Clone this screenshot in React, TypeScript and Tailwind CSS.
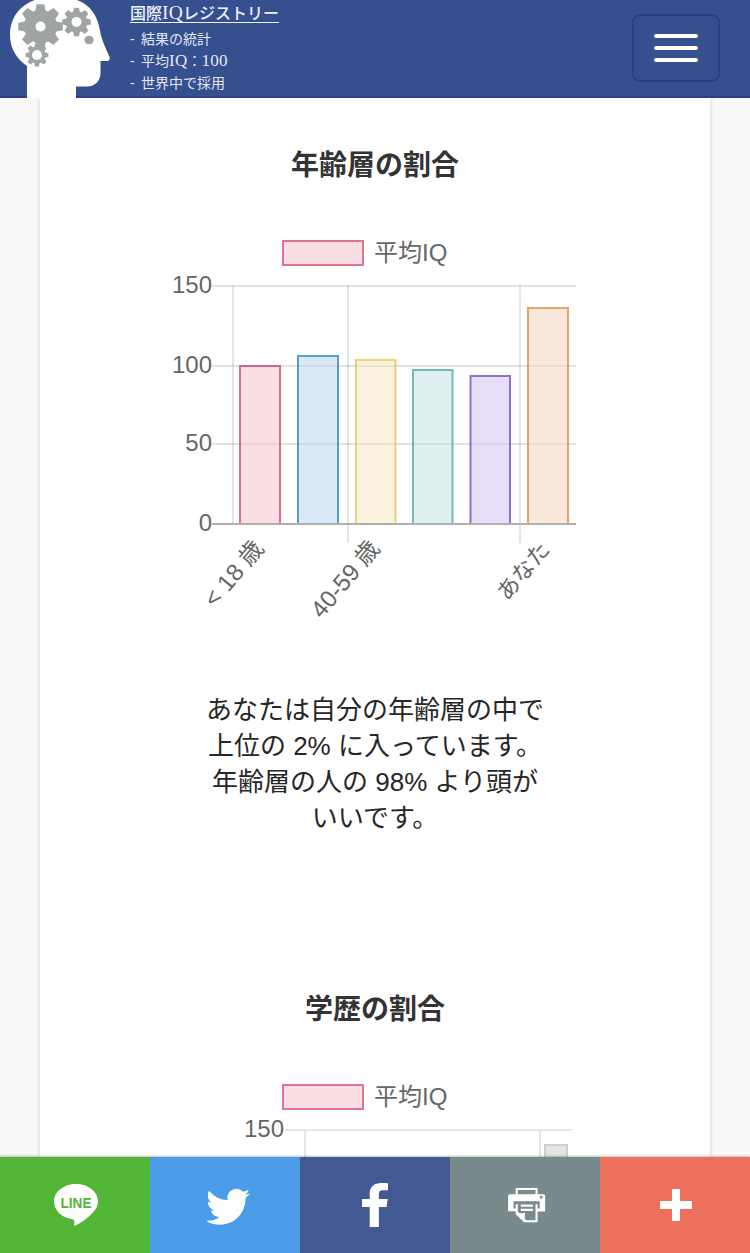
import type { ReactNode } from 'react'

const FONT = "font-['Liberation_Sans','Noto_Sans_CJK_JP',sans-serif]"

type Bar = { x: number; top: number; width: number; stroke: string; fill: string }

const AGE_BARS: Bar[] = [
  { x: 80, top: 136, width: 40, stroke: '#d9718e', fill: '#f9dfe4' },
  { x: 138, top: 126, width: 40, stroke: '#5a9fc9', fill: '#d9e9f8' },
  { x: 196, top: 130, width: 39.5, stroke: '#f0d078', fill: '#fcf3de' },
  { x: 253, top: 140, width: 39.5, stroke: '#72bcb8', fill: '#def0f0' },
  { x: 310.5, top: 146, width: 39.5, stroke: '#9270c8', fill: '#e7def9' },
  { x: 368, top: 78, width: 40, stroke: '#dfa767', fill: '#fae9da' },
]

const AGE_LABELS = [
  { text: '< 18 歳', x: 105, y: 319, size: 24 },
  { text: '40-59 歳', x: 221, y: 319, size: 24 },
  { text: 'あなた', x: 391, y: 320, size: 22.5 },
]

function Legend() {
  return (
    <g>
      <rect x="123" y="11" width="80" height="24" fill="#f9dfe4" stroke="#e07392" strokeWidth="2" />
      <text x="214" y="31" fontSize="24">平均IQ</text>
    </g>
  )
}

function BarShape({ bar, base }: { bar: Bar; base: number }) {
  const right = bar.x + bar.width
  return (
    <path
      d={`M${bar.x} ${base}V${bar.top}H${right}V${base}`}
      fill={bar.fill}
      stroke={bar.stroke}
      strokeWidth="2"
    />
  )
}

function AgeChart() {
  return (
    <svg width="430" height="400" viewBox="0 0 430 400" fill="#666" className="block">
      <Legend />
      <g stroke="#000" strokeOpacity="0.05" strokeWidth="2">
        <path d="M52 56H416M52 136H416M52 214H416" />
      </g>
      {AGE_BARS.map((bar) => (
        <BarShape key={bar.x} bar={bar} base={293} />
      ))}
      <g stroke="#000" strokeWidth="2">
        <path d="M52 56H416M52 136H416M52 214H416" strokeOpacity="0.06" />
        <path d="M73 55V293M188 55V313M360 55V313" strokeOpacity="0.1" />
      </g>
      <path d="M52 294H416" stroke="#b0b0b0" strokeWidth="2" />
      <g fontSize="24" textAnchor="end">
        <text x="52" y="63">150</text>
        <text x="52" y="143">100</text>
        <text x="52" y="221">50</text>
        <text x="52" y="301">0</text>
        {AGE_LABELS.map((label) => (
          <text
            key={label.text}
            fontSize={label.size}
            transform={`translate(${label.x} ${label.y}) rotate(-50)`}
          >
            {label.text}
          </text>
        ))}
      </g>
    </svg>
  )
}

function EducationChart() {
  return (
    <svg width="430" height="400" viewBox="0 0 430 400" fill="#666" className="block">
      <Legend />
      <BarShape bar={{ x: 385, top: 71, width: 22, stroke: '#cfcfcf', fill: '#e4e4e4' }} base={293} />
      <path d="M125 56H412M145 55V293M380 55V293" stroke="#000" strokeOpacity="0.1" strokeWidth="2" />
      <text x="124" y="63" fontSize="24" textAnchor="end">150</text>
    </svg>
  )
}

function Gear({ cx, cy, r, hole, teeth }: { cx: number; cy: number; r: number; hole: number; teeth: number }) {
  const angles = Array.from({ length: teeth }, (_, i) => (360 / teeth) * i)
  const half = r * 0.17
  return (
    <g transform={`translate(${cx} ${cy})`}>
      <circle r={r * 0.74} fill="#a0a5a3" />
      {angles.map((a) => (
        <path
          key={a}
          transform={`rotate(${a})`}
          fill="#a0a5a3"
          d={`M${-half * 1.4} ${-r * 0.65}L${-half} ${-r * 0.99}H${half}L${half * 1.4} ${-r * 0.65}Z`}
        />
      ))}
      <circle r={hole} fill="#fff" />
    </g>
  )
}

function HeadLogo() {
  return (
    <svg width="120" height="98" viewBox="0 0 120 98" className="block shrink-0">
      <path
        fill="#fff"
        d="M27 98V66C17 59 10 49 10 35C10 18 20 5 35 0C42-3 70-3 77 0C91 5 98 17 100 31C101 38 106 49 109.500 57C110.500 59.500 109 61 106 61H100.500V73C100.500 81 95 86.500 87 86.500H76V98Z"
      />
      <Gear cx={40.5} cy={26.5} r={22.5} hole={5} teeth={8} />
      <Gear cx={76.5} cy={22} r={14.5} hole={5} teeth={8} />
      <Gear cx={37} cy={55} r={11.5} hole={5} teeth={8} />
      <ellipse cx="89" cy="40" rx="4.700" ry="4.200" fill="#a0a5a3" />
    </svg>
  )
}

function Latin({ children }: { children: ReactNode }) {
  return (
    <span className="font-['Liberation_Serif',serif] text-[1.22em] leading-none tracking-[0.2px]">
      {children}
    </span>
  )
}

function Dash() {
  return <span className="inline-block w-[11px]">-</span>
}

function Header() {
  return (
    <header className="z-10 flex h-[98px] shrink-0 bg-[#364f8e] shadow-[inset_0_-2px_0_#303f7f]">
      <HeadLogo />
      <div className="flex-1 pl-2.5 text-[14px] leading-[22px] whitespace-nowrap text-[#e3e8f5]">
        <div className="mt-[3px] mb-[3px] h-[22px] text-[16px] font-medium text-[#eef2fb]">
          <span className="inline-block h-5 border-b border-[#eef2fb] leading-[22px]">
            国際<Latin>IQ</Latin>レジストリー
          </span>
        </div>
        <div className="h-[22px]"><Dash />結果の統計</div>
        <div className="h-[22px]"><Dash />平均<Latin>IQ</Latin>：<Latin>100</Latin></div>
        <div className="h-[22px]"><Dash />世界中で採用</div>
      </div>
      <button
        type="button"
        aria-label="メニュー"
        className="mt-3.5 mr-[30px] flex h-[68px] w-[88px] flex-col items-center justify-center gap-2 rounded-lg border-2 border-[#2c427d]"
      >
        <span className="h-1 w-11 rounded-[2px] bg-white" />
        <span className="h-1 w-11 rounded-[2px] bg-white" />
        <span className="h-1 w-11 rounded-[2px] bg-white" />
      </button>
    </header>
  )
}

function ShareIcon({ d }: { d: string }) {
  return (
    <svg width="64" height="64" viewBox="0 0 32 32" fill="#fff">
      <path d={d} />
    </svg>
  )
}

function LineIcon() {
  return (
    <svg width="64" height="64" viewBox="0 0 64 64">
      <path
        fill="#fff"
        d="M32 11C44 11 54 18.500 54 28.500C54 33 52 36.500 48.500 40C43.500 45.500 36 50.500 31.500 52.500C29.700 53.200 30 52 30.200 50.800C30.500 49 30.700 46.500 28 46C17.500 44.500 10 37.500 10 28.500C10 18.500 20 11 32 11Z"
      />
      <text
        x="32"
        y="34.500"
        textAnchor="middle"
        textLength="31"
        lengthAdjust="spacingAndGlyphs"
        fontSize="15"
        fontWeight="bold"
        fill="#53b535"
      >
        LINE
      </text>
    </svg>
  )
}

const TWITTER =
  'M27.996 10.116c-.81.36-1.68.602-2.592.71a4.526 4.526 0 0 0 1.984-2.496 9.037 9.037 0 0 1-2.866 1.095 4.513 4.513 0 0 0-7.69 4.116 12.81 12.81 0 0 1-9.3-4.715 4.49 4.49 0 0 0-.612 2.27 4.51 4.51 0 0 0 2.008 3.755 4.495 4.495 0 0 1-2.044-.564v.057a4.515 4.515 0 0 0 3.62 4.425 4.52 4.52 0 0 1-2.04.077 4.517 4.517 0 0 0 4.217 3.134 9.055 9.055 0 0 1-5.604 1.93A9.18 9.18 0 0 1 6 23.85a12.773 12.773 0 0 0 6.918 2.027c8.3 0 12.84-6.876 12.84-12.84 0-.195-.005-.39-.014-.583a9.172 9.172 0 0 0 2.252-2.336'
const FACEBOOK =
  'M22 5.16c-.406-.054-1.806-.16-3.43-.16-3.4 0-5.733 1.825-5.733 5.17v2.882H9v3.913h3.837V27h4.604V16.965h3.823l.587-3.913h-4.41v-2.5c0-1.123.347-1.903 2.198-1.903H22V5.16z'
const PRINT =
  'M24.67 10.62h-2.86V7.49H10.82v3.12H7.95c-.5 0-.9.4-.9.9v7.66h3.77v1.31L15 24.66h6.81v-5.44h3.77v-7.7c-.01-.5-.41-.9-.91-.9zM11.88 8.56h8.86v2.06h-8.86V8.56zm10.98 9.18h-1.05v-2.1h-1.06v7.96H16.4c-1.58 0-.82-3.74-.82-3.74s-3.65.89-3.69-.78v-3.43h-1.06v2.06H9.77v-3.58h13.09v3.61zm.75-4.91c-.4 0-.72-.32-.72-.72 0-.4.32-.72.72-.72.4 0 .72.32.72.72 0 .4-.32.72-.72.72zm-4.12 2.96h-6.1v1.06h6.1v-1.06zm-6.11 3.15h6.1v-1.06h-6.1v1.06z'
const PLUS = 'M18 14V8h-4v6H8v4h6v6h4v-6h6v-4h-6z'

function ShareBar() {
  return (
    <nav className="z-10 grid h-24 shrink-0 grid-cols-5 shadow-[0_-1px_2px_rgba(0,0,0,0.25)]">
      <a className="flex items-center justify-center bg-[#53b535] pl-0.5"><LineIcon /></a>
      <a className="flex items-center justify-center bg-[#4c9de9] pl-0.5"><ShareIcon d={TWITTER} /></a>
      <a className="flex items-center justify-center bg-[#425993] pl-0.5"><ShareIcon d={FACEBOOK} /></a>
      <a className="flex items-center justify-center bg-[#788a8c] pl-0.5"><ShareIcon d={PRINT} /></a>
      <a className="flex items-center justify-center bg-[#ec705b] pl-0.5"><ShareIcon d={PLUS} /></a>
    </nav>
  )
}

function Heading({ children }: { children: ReactNode }) {
  return <h2 className="h-10 text-[28px] leading-10 font-bold text-[#333]">{children}</h2>
}

export default function App() {
  return (
    <div className={`flex h-[1253px] w-[750px] flex-col overflow-hidden bg-[#f9f9f9] ${FONT}`}>
      <Header />
      <main className="mx-10 flex min-h-0 flex-1 flex-col items-center overflow-hidden bg-white pt-12 shadow-[0_0_5px_rgba(0,0,0,0.18)]">
        <Heading>年齢層の割合</Heading>
        <div className="mt-11 shrink-0">
          <AgeChart />
        </div>
        <p className="mt-[62px] shrink-0 text-center text-[26px] leading-9 text-[#262626]">
          あなたは自分の年齢層の中で
          <br />
          上位の 2% に入っています。
          <br />
          年齢層の人の 98% より頭が
          <br />
          いいです。
        </p>
        <div className="mt-[154px] shrink-0">
          <Heading>学歴の割合</Heading>
        </div>
        <div className="mt-11 shrink-0">
          <EducationChart />
        </div>
      </main>
      <ShareBar />
    </div>
  )
}
